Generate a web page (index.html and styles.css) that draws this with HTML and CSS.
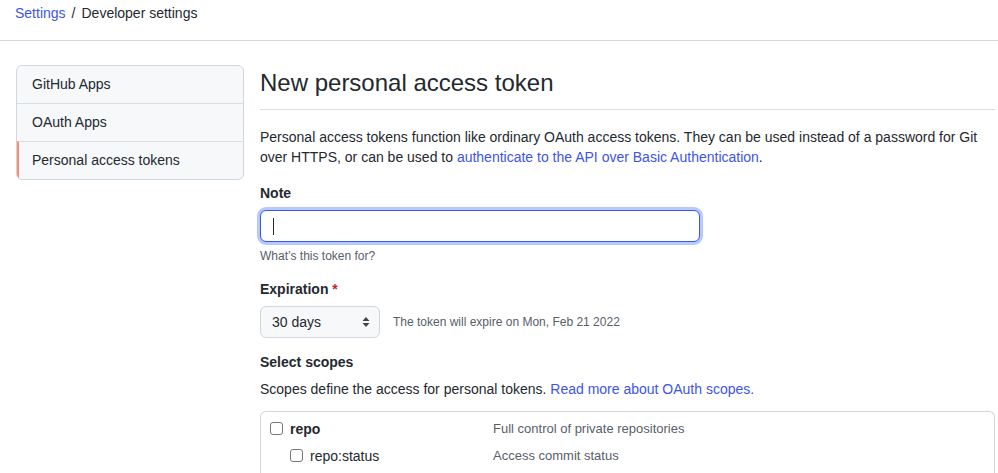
FILE: index.html
```html
<!DOCTYPE html>
<html lang="en">
<head>
<meta charset="utf-8">
<title>New personal access token</title>
<link rel="stylesheet" href="styles.css">
</head>
<body>
<nav class="crumbs">
  <a href="#" class="link">Settings</a><span class="sep">/</span><span class="current">Developer settings</span>
</nav>
<div class="layout">
  <aside class="menu">
    <a href="#" class="menu-item">GitHub Apps</a>
    <a href="#" class="menu-item">OAuth Apps</a>
    <a href="#" class="menu-item selected">Personal access tokens</a>
  </aside>
  <main class="main">
    <h1 class="title">New personal access token</h1>
    <p class="lead">Personal access tokens function like ordinary OAuth access tokens. They can be used instead of a password for Git over HTTPS, or can be used to <a href="#" class="link">authenticate to the API over Basic Authentication</a>.</p>

    <div class="field">
      <label class="label">Note</label>
      <div class="input"><span class="caret"></span></div>
      <p class="note">What’s this token for?</p>
    </div>

    <div class="field">
      <label class="label">Expiration <span class="req">*</span></label>
      <div class="expire-row">
        <div class="select">30 days
          <svg class="arrows" width="8" height="12" viewBox="0 0 8 12"><path d="M4 1 L7.5 5 H0.5 Z M4 11 L0.5 7 H7.5 Z" fill="#444"/></svg>
        </div>
        <span class="expire-note">The token will expire on Mon, Feb 21 2022</span>
      </div>
    </div>

    <div class="field">
      <label class="label">Select scopes</label>
      <p class="scopes-desc">Scopes define the access for personal tokens. <a href="#" class="link">Read more about OAuth scopes.</a></p>
      <div class="scopes">
        <div class="scope-row">
          <div class="scope-name"><span class="cb"></span><b>repo</b></div>
          <div class="scope-desc">Full control of private repositories</div>
        </div>
        <div class="scope-row sub">
          <div class="scope-name"><span class="cb"></span>repo:status</div>
          <div class="scope-desc">Access commit status</div>
        </div>
      </div>
    </div>
  </main>
</div>
</body>
</html>
```
FILE: styles.css
```css
* { box-sizing: border-box; }
html, body { margin: 0; padding: 0; background: #fff; }
body {
  font-family: "Liberation Sans", Arial, sans-serif;
  font-size: 14px;
  line-height: 20px;
  color: #24292f;
}
.link { color: #3d55e8; text-decoration: none; }
.crumbs {
  height: 41px;
  padding: 3px 15px 0;
  border-bottom: 1px solid #d0d7de;
  font-size: 14px;
}
.sep { margin: 0 6px; color: #24292f; }
.layout {
  display: flex;
  gap: 16px;
  padding: 24px 3px 0 16px;
}
.menu {
  width: 228px;
  flex: none;
  align-self: flex-start;
  border: 1px solid #d0d7de;
  border-radius: 6px;
  background: #f6f8fa;
  overflow: hidden;
}
.menu-item {
  display: block;
  height: 38px;
  padding: 8px 15px;
  color: #24292f;
  text-decoration: none;
  border-top: 1px solid #d8dee4;
}
.menu-item:first-child { border-top: 0; height: 37px; }
.menu-item.selected {
  border-left: 2px solid #fd8c73;
  padding-left: 13px;
}
.main { flex: 1; min-width: 0; }
.title {
  margin: 0;
  font-size: 24px;
  font-weight: 400;
  line-height: 32px;
  padding-top: 2px;
  padding-bottom: 10px;
  border-bottom: 1px solid #d8dee4;
}
.lead { margin: 17px 0 16px; }
.field { margin-bottom: 14px; }
.label { display: block; font-weight: 700; margin-bottom: 7px; }
.req { color: #cf222e; }
.input {
  width: 440px;
  height: 32px;
  border: 1px solid #3d55e8;
  border-radius: 6px;
  box-shadow: 0 0 0 3px rgba(9, 80, 240, 0.3);
  background: #fff;
  padding: 7px 12px;
  display: flex;
  align-items: center;
}
.caret { width: 1px; height: 17px; background: #24292f; }
.note { margin: 5px 0 0; font-size: 12px; line-height: 18px; color: #57606a; }
.expire-row { display: flex; align-items: center; gap: 13px; margin-bottom: 1px; }
.select {
  width: 120px;
  height: 32px;
  border: 1px solid #d0d7de;
  border-radius: 6px;
  background: #f6f8fa;
  padding: 5px 11px;
  display: flex;
  justify-content: space-between;
  align-items: center;
  color: #24292f;
}
.arrows { margin-right: -2px; }
.expire-note { font-size: 12px; color: #57606a; }
.scopes-desc { margin: 0 0 12px; }
.scopes {
  border: 1px solid #d0d7de;
  border-bottom: 0;
  border-radius: 6px 6px 0 0;
  padding: 3px 9px;
  height: 70px;
}
.scope-row { display: flex; height: 27px; align-items: center; }
.scope-row.sub .scope-name { padding-left: 20px; }
.scope-name { width: 223px; display: flex; align-items: center; }
.scope-name b { font-weight: 700; }
.cb {
  width: 13px;
  height: 13px;
  border: 1px solid #767676;
  border-radius: 3px;
  margin-right: 7px;
  background: #fff;
}
.scope-desc { color: #57606a; font-size: 13px; }
```
